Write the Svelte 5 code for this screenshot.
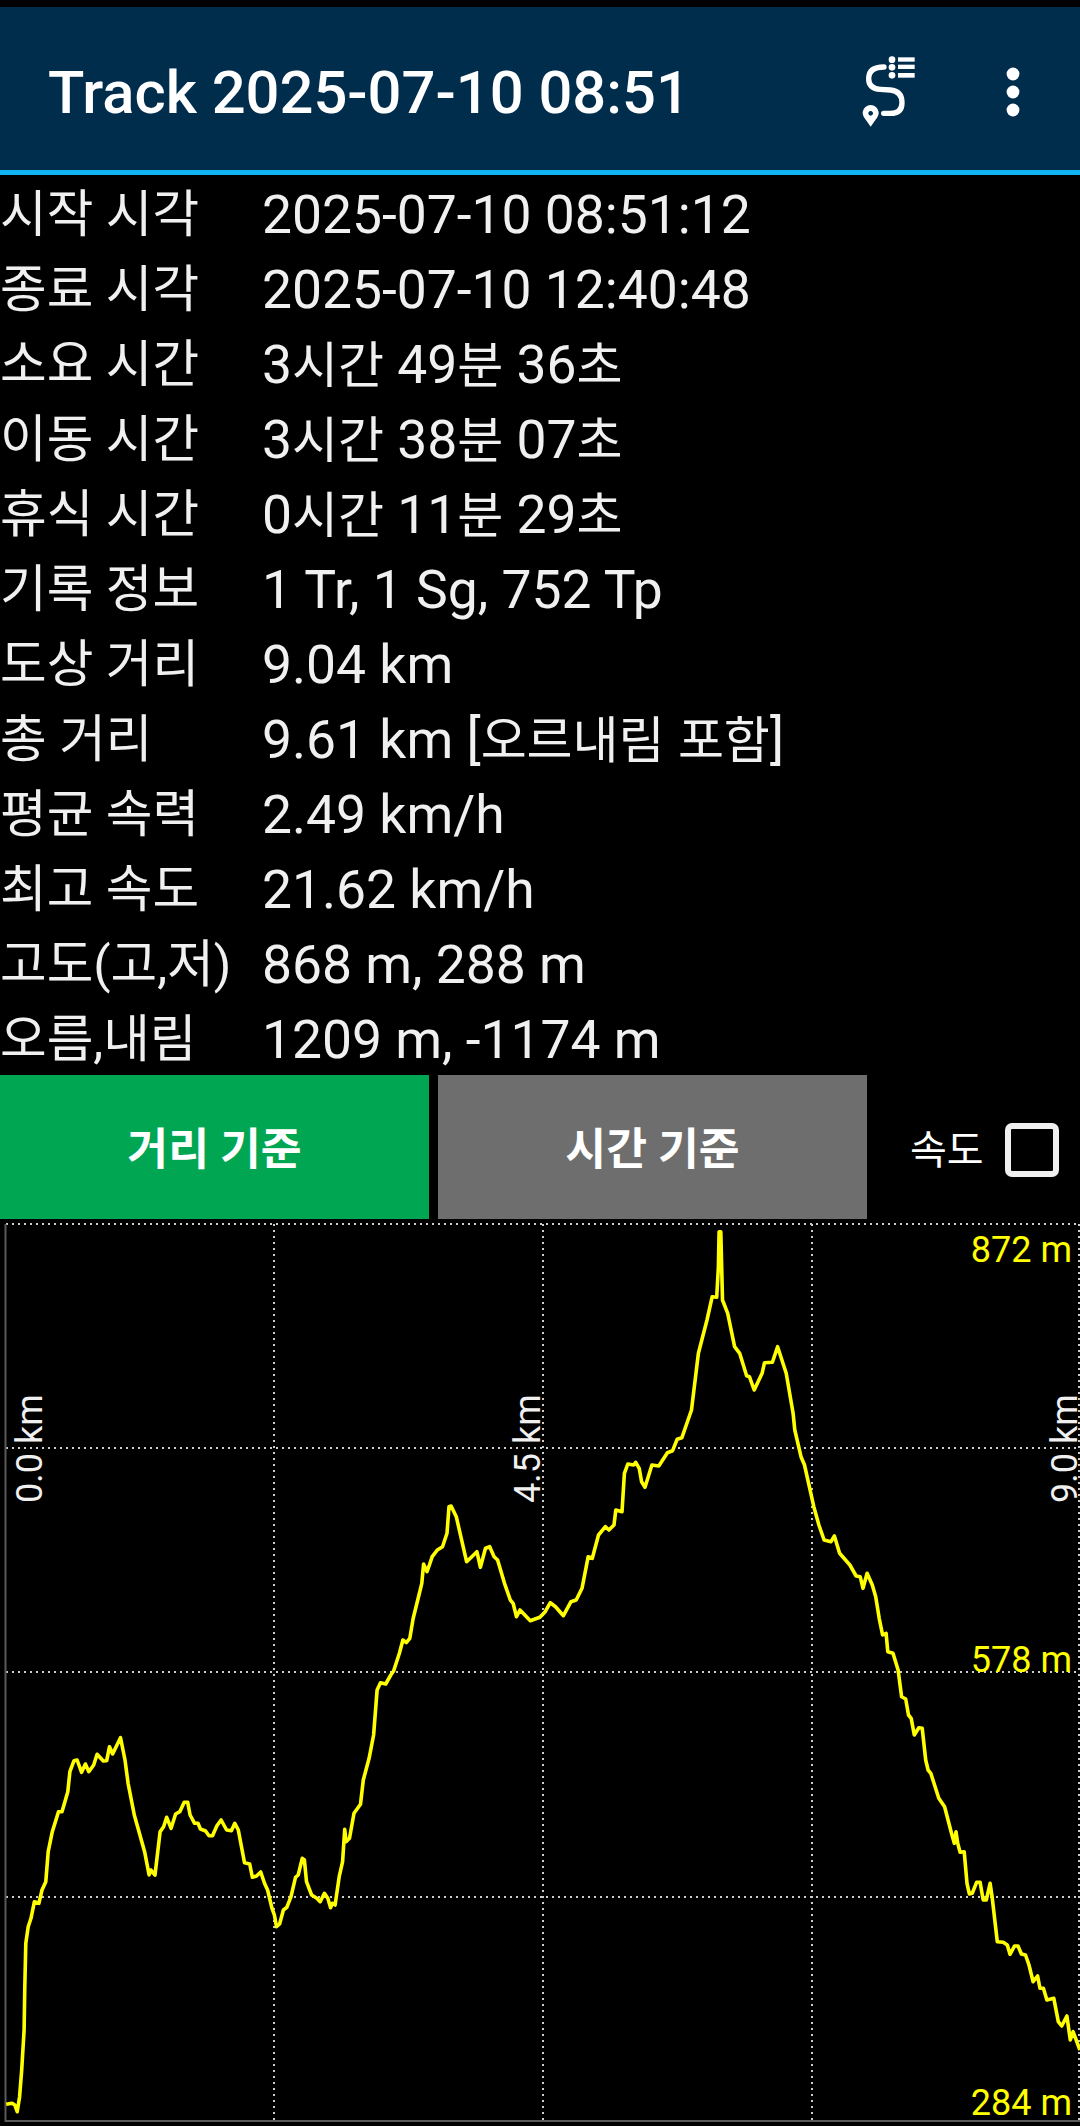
<script>
  const rows = [
    ["시작 시각", "2025-07-10 08:51:12"],
    ["종료 시각", "2025-07-10 12:40:48"],
    ["소요 시간", "3시간 49분 36초"],
    ["이동 시간", "3시간 38분 07초"],
    ["휴식 시간", "0시간 11분 29초"],
    ["기록 정보", "1 Tr, 1 Sg, 752 Tp"],
    ["도상 거리", "9.04 km"],
    ["총 거리", "9.61 km [오르내림 포함]"],
    ["평균 속력", "2.49 km/h"],
    ["최고 속도", "21.62 km/h"],
    ["고도(고,저)", "868 m, 288 m"],
    ["오름,내림", "1209 m, -1174 m"],
  ];

  // hangul sits a little smaller than the digits next to it
  const split = (value) => value.split(/([가-힣]+)/).filter(Boolean);
  const isKo = (part) => /[가-힣]/.test(part);

  // chart is drawn in page pixels, offset by the top of the svg
  const top = 1220;
  const gridX = [274, 543, 812, 1079];
  const gridY = [1224, 1448, 1672, 1897];

  const altLabels = [
    ["872 m", 1262],
    ["578 m", 1672],
    ["284 m", 2115],
  ];
  const distLabels = [
    ["0.0 km", 42],
    ["4.5 km", 540],
    ["9.0 km", 1077],
  ];

  // traced elevation profile, pieces as [x origin, y origin, x y x y ...]
  const pieces = [
    [0, 1670, [18,1303,35,1300,43,1305,50,1325,57,1280,63,1200,70,1080,72,950,75,820,82,770,90,745,100,695,113,700,122,660,133,635,140,545,152,485,170,425,180,425,197,365,203,305,215,272,224,270,237,307,248,282,258,305,272,285,282,253,300,273,310,272,318,230,327,252,350,203,363,270,372,340,390,435,420,545,433,615,438,600,450,615,465,485,475,470,484,442,497,475,510,432,522,425,535,397,545,397,552,435,565,460,575,460,582,477,597,483,607,497,617,497,630,467,642,450,658,480,672,482,682,460,692,480,710,578,725,582,733,622,745,618,757,606,768,640,777,660,790,715,797,735,803,770,812,762,823,720,833,712,845,680,858,622,866,615,878,565,884,570,890,635,905,675,920,685,930,695,942,670,952,685,960,713,965,700,973,705,985,620,995,575,1001,478,1005,515,1015,505,1028,430,1047,403,1055,330,1072,265,1085,195,1095,60,1105,38,1120,42,1135,15,1143,3]],
    [0, 1210, [1160,1330,1170,1290,1180,1298,1190,1285,1200,1225,1218,1150,1225,1120,1230,1062,1240,1085,1247,1065,1255,1040,1270,1020,1285,1010,1298,970,1304,890,1310,888,1325,920,1335,965,1355,1055,1370,1040,1385,1025,1395,1072,1410,1015,1422,1010,1435,1040,1445,1050,1465,1120,1482,1170,1490,1180,1500,1220,1510,1200,1540,1232,1568,1222]],
    [540, 1210, [15,1205,30,1178,45,1190,68,1217,90,1175,105,1170,122,1135,140,1040,152,1045,170,975,190,950,200,960,215,945,220,900,238,905,245,790,255,762,272,765,278,757,288,775,295,815,305,832,325,765,345,768,370,728,385,722,398,688,412,683,440,600,460,430,485,330,500,260,513,262,518,170,520,65,525,65,530,270,545,310,565,410,580,430,600,497,608,500,622,540,645,490,652,458,675,457,690,410,715,490,735,610,740,660,758,740,768,765,795,890,810,945,825,990,845,995,855,978,870,1030,900,1065,918,1098,930,1100,938,1135,950,1090,965,1125,975,1160,985,1225,995,1275,1005,1270,1010,1325,1025,1330,1040,1380]],
    [540, 1670, [1050,80,1062,87,1070,135,1078,145,1087,195,1100,173,1110,175,1120,270,1127,300,1135,310,1158,385,1175,410,1195,490,1203,520,1208,485,1213,520,1220,547,1232,545,1240,640,1247,672,1255,670,1268,637,1278,637,1287,690,1296,690,1307,640,1313,680,1328,815,1345,817,1357,825,1365,853,1378,828,1388,828,1398,852,1410,855,1420,885,1432,935,1445,918,1452,955,1462,955,1472,990,1492,985,1505,1055,1515,1068,1530,1038,1540,1110,1548,1085,1568,1140]],
  ];

  const profile = pieces
    .flatMap(([ox, oy, pts]) => {
      const out = [];
      for (let i = 0; i < pts.length; i += 2) {
        out.push(`${(ox + pts[i] / 2.904).toFixed(1)},${(oy + pts[i + 1] / 3).toFixed(1)}`);
      }
      return out;
    })
    .join(" ");
</script>

<div class="screen">
  <header>
    <h1>Track 2025-07-10 08:51</h1>
    <svg class="route" viewBox="130 80 165 216" width="55" height="72">
      <path d="M196 113Q150 113 150 148Q150 178 185 180L215 182Q250 185 250 220Q250 252 215 252L195 252" />
      <circle cx="220" cy="91" r="10" />
      <circle cx="220" cy="114" r="10" />
      <circle cx="220" cy="138" r="10" />
      <rect x="238" y="84" width="50" height="13" />
      <rect x="238" y="106" width="50" height="13" />
      <rect x="238" y="131" width="50" height="14" />
      <path class="pin" fill-rule="evenodd" d="M156 292L136 264A24 24 0 1 1 176 264ZM156 245a7 7 0 1 0 .01 0Z" />
    </svg>
    <svg class="more" viewBox="0 0 14 72" width="14" height="72">
      <circle cx="7" cy="18" r="6.4" />
      <circle cx="7" cy="36" r="6.4" />
      <circle cx="7" cy="54" r="6.4" />
    </svg>
  </header>

  <section class="info">
    {#each rows as [label, value]}
      <div class="label">{label}</div>
      <div class="value">
        {#each split(value) as part}
          {#if isKo(part)}<span class="ko">{part}</span>{:else}{part}{/if}
        {/each}
      </div>
    {/each}
  </section>

  <div class="actions">
    <button class="on">거리 기준</button>
    <button>시간 기준</button>
    <span class="speed">속도</span>
    <span class="check"></span>
  </div>

  <svg class="chart" viewBox="0 {top} 1080 906" width="1080" height="906">
    {#each gridY as y}
      <line class="grid" x1="6" x2="1080" y1={y} y2={y} />
    {/each}
    {#each gridX as x}
      <line class="grid" x1={x} x2={x} y1="1224" y2="2120" />
    {/each}
    <path class="axis" d="M5.5 1224V2121H1080" />
    <polyline points={profile} />
    {#each altLabels as [text, y]}
      <text class="alt" x="1072" {y}>{text}</text>
    {/each}
    {#each distLabels as [text, x]}
      <text class="dist" {x} y="1503" transform="rotate(-90 {x} 1503)">{text}</text>
    {/each}
  </svg>
</div>

<style>
  :global(body) {
    background: #000;
  }
  .screen {
    width: 1080px;
    height: 2126px;
    padding-top: 7px;
    box-sizing: border-box;
    background: #000;
    color: #f0f0f0;
    font-family: Roboto, "Noto Sans CJK KR", sans-serif;
    overflow: hidden;
  }
  header {
    display: flex;
    align-items: center;
    height: 157px;
    padding: 6px 0 0 48px;
    background: #012d4d;
    border-bottom: 5px solid #10b4f0;
  }
  h1 {
    flex: 1;
    margin: 2px 0 0;
    font-size: 59.7px;
    font-weight: 500;
    color: #fff;
    white-space: nowrap;
  }
  svg {
    display: block;
  }
  .route {
    margin-right: 89px;
    fill: #fff;
  }
  .route path {
    fill: none;
    stroke: #fff;
    stroke-width: 16;
    stroke-linecap: round;
  }
  .route path.pin {
    fill: #fff;
    stroke: none;
  }
  .more {
    margin-right: 60px;
    fill: #fff;
  }
  .info {
    display: grid;
    grid-template-columns: 262px 1fr;
    grid-auto-rows: 75px;
    height: 900px;
    font-size: 53.4px;
    line-height: 80px;
  }
  .label,
  .value {
    white-space: pre;
  }
  .label {
    font-size: 50.7px;
  }
  .ko {
    font-size: 50px;
    line-height: 1;
  }
  .actions {
    display: flex;
    align-items: center;
    height: 144px;
  }
  button {
    width: 429px;
    height: 100%;
    margin-right: 9px;
    padding: 0 0 4px;
    border: 0;
    background: #6e6e6e;
    color: #fff;
    font: 700 44.4px Roboto, "Noto Sans CJK KR", sans-serif;
  }
  button.on {
    background: #00a651;
  }
  .speed {
    width: 95px;
    margin-left: 34px;
    font-size: 40px;
    color: #fff;
  }
  .check {
    width: 42px;
    height: 42px;
    margin-top: 6px;
    border: 6px solid #f0f0f0;
    border-radius: 7px;
  }
  .chart {
    margin-top: 1px;
  }
  .grid {
    stroke: #ccc;
    stroke-width: 2;
    stroke-dasharray: 2 4;
  }
  .axis {
    fill: none;
    stroke: #5a5a5a;
    stroke-width: 2;
  }
  polyline {
    fill: none;
    stroke: #ff0;
    stroke-width: 3.6;
    stroke-linejoin: round;
  }
  text {
    font-family: Roboto, sans-serif;
    font-size: 36px;
  }
  .alt {
    fill: #ff0;
    text-anchor: end;
  }
  .dist {
    fill: #f0f0f0;
  }
</style>
